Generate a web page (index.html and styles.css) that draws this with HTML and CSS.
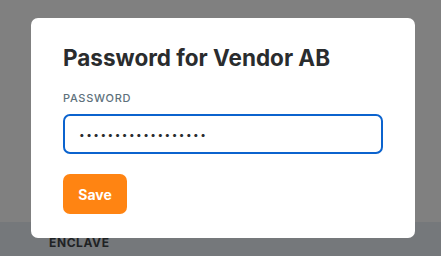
FILE: index.html
```html
<!DOCTYPE html>
<html lang="en">
<head>
    <meta charset="UTF-8">
    <meta name="viewport" content="width=device-width, initial-scale=1.0">
    <title>Password - Enclave</title>
    <link rel="stylesheet" href="styles.css">
</head>
<body>
    <div class="page">
        <main class="page-content"></main>
        <footer class="page-footer">
            <span class="brand">ENCLAVE</span>
        </footer>
    </div>

    <div class="overlay">
        <div class="modal">
            <h1 class="modal-title">Password for Vendor AB</h1>
            <form class="modal-form">
                <div class="form-group">
                    <label for="password">Password</label>
                    <input type="password" id="password" name="password" value="vendorab-secret-18">
                </div>
                <button type="submit" class="save-button">Save</button>
            </form>
        </div>
    </div>
</body>
</html>
```

FILE: styles.css
```css
* {
    margin: 0;
    padding: 0;
    box-sizing: border-box;
}

body {
    font-family: Inter, "Noto Sans", Arial, sans-serif;
    background-color: #808080;
    min-height: 100vh;
}

.page {
    min-height: 100vh;
    display: flex;
    flex-direction: column;
}

.page-content {
    flex: 1;
}

.page-footer {
    height: 34px;
    background-color: #75787b;
    padding: 11px 0 0 49px;
    line-height: 16px;
}

.brand {
    font-size: 12px;
    font-weight: 700;
    letter-spacing: 0.6px;
    color: #1f2224;
}

.overlay {
    position: fixed;
    inset: 0;
    padding: 18px 0 0 31px;
}

.modal {
    width: 384px;
    background-color: white;
    border-radius: 7px;
    padding: 26px 32px 24px;
}

.modal-title {
    font-size: 22.5px;
    line-height: 28px;
    font-weight: 700;
    color: #2a2c2e;
    margin-bottom: 18px;
}

.form-group {
    margin-bottom: 20px;
}

.form-group label {
    display: block;
    font-size: 11px;
    line-height: 16px;
    font-weight: 500;
    text-transform: uppercase;
    letter-spacing: 0.7px;
    color: #5e717c;
    margin-bottom: 8px;
}

.form-group input {
    display: block;
    width: 320px;
    height: 40px;
    padding: 0 14px;
    border: 2px solid #0b63ce;
    border-radius: 7px;
    font-family: inherit;
    font-size: 10px;
    letter-spacing: 1.5px;
    color: #2a2c2e;
    outline: none;
}

.save-button {
    width: 64px;
    height: 40px;
    background-color: #ff8412;
    color: white;
    border: none;
    border-radius: 7px;
    font-family: inherit;
    font-size: 14px;
    font-weight: 700;
    cursor: pointer;
}
```
